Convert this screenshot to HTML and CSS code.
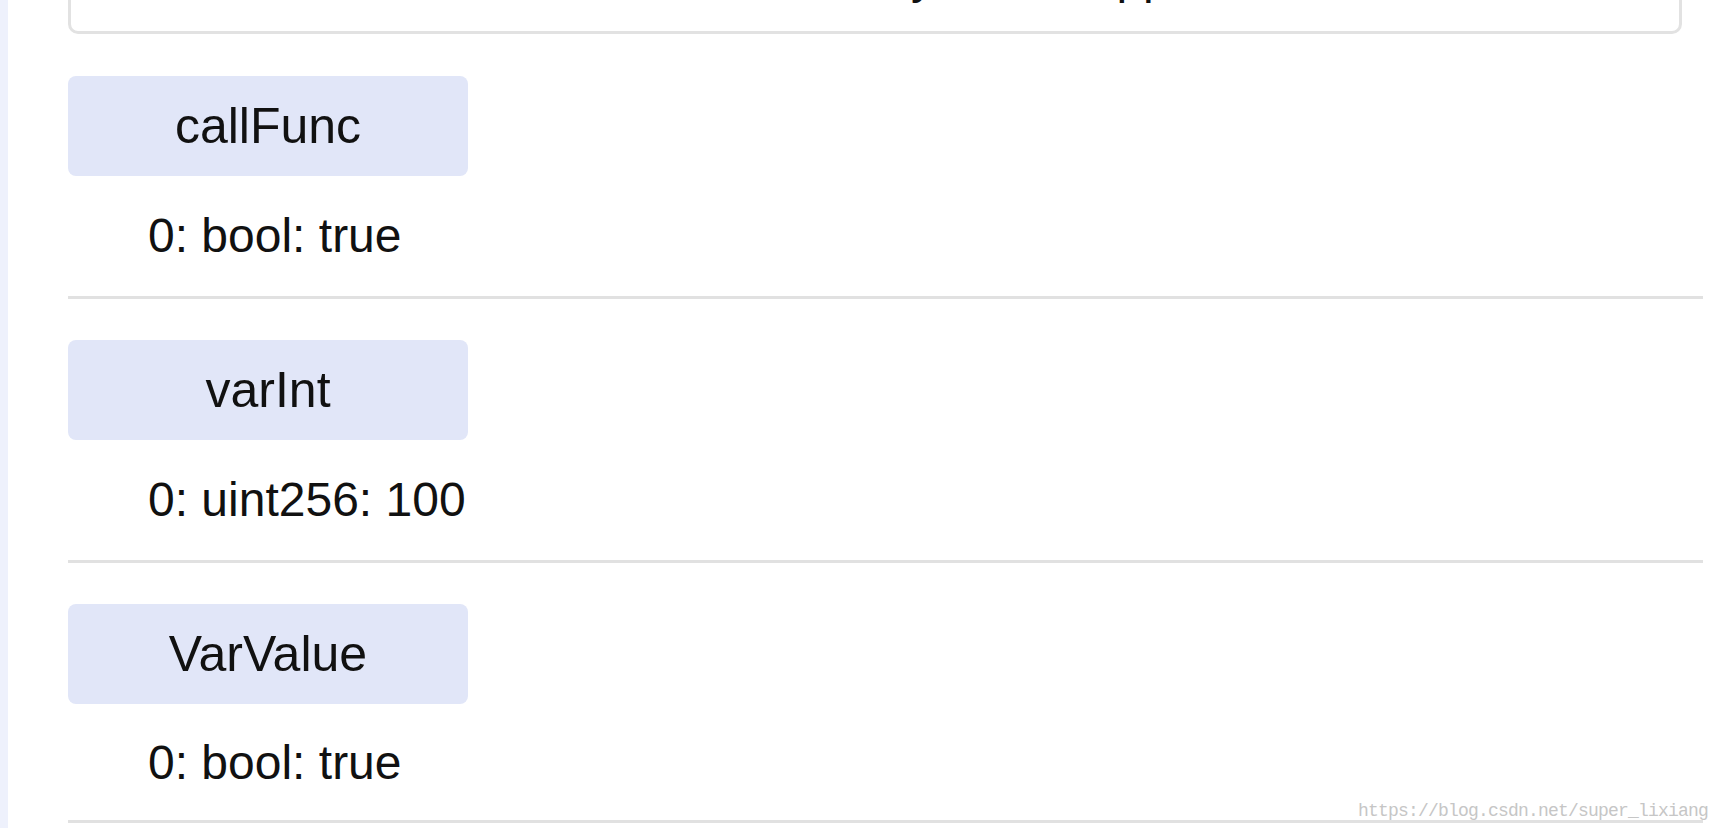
FILE: index.html
```html
<!DOCTYPE html>
<html lang="en">
<head>
<meta charset="utf-8">
<title>Results</title>
<link rel="stylesheet" href="styles.css">
</head>
<body>
<div class="page">
  <aside class="rail"></aside>
  <main class="content">
    <div class="card"><p class="card-text">my new DApp</p></div>
    <section class="result">
      <button class="fn" type="button">callFunc</button>
      <div class="value">0: bool: true</div>
    </section>
    <section class="result">
      <button class="fn" type="button">varInt</button>
      <div class="value">0: uint256: 100</div>
    </section>
    <section class="result result-last">
      <button class="fn" type="button">VarValue</button>
      <div class="value">0: bool: true</div>
    </section>
  </main>
</div>
<div class="watermark">https://blog.csdn.net/super_lixiang</div>
</body>
</html>
```
FILE: styles.css
```css
html, body {
  margin: 0;
  padding: 0;
  background: #ffffff;
}

body {
  width: 1720px;
  height: 828px;
  overflow: hidden;
  position: relative;
  font-family: "Liberation Sans", Arial, sans-serif;
  color: #111111;
}

.page {
  display: flex;
  height: 828px;
  overflow: hidden;
}

.rail {
  width: 8px;
  flex: 0 0 8px;
  background: #eef1fc;
}

.content {
  flex: 1;
  padding: 0 17px 0 60px;
}

.card {
  margin: -74px 21px 1px 0;
  border: 3px solid #e2e2e2;
  border-radius: 10px;
  padding: 20px 0 26px 800px;
}

.card-text {
  margin: 0;
  font-size: 48px;
  line-height: 56px;
  white-space: nowrap;
}

.result {
  padding: 41px 0 32px;
  border-bottom: 3px solid #e1e1e1;
}

.result-last {
  padding-bottom: 29px;
}

.fn {
  display: block;
  width: 400px;
  height: 100px;
  padding: 0;
  border: none;
  border-radius: 8px;
  background: #e1e6f8;
  font-family: "Liberation Sans", Arial, sans-serif;
  font-size: 50px;
  line-height: 100px;
  color: #111111;
  text-align: center;
}

.value {
  margin: 32px 0 0 80px;
  font-size: 48px;
  line-height: 56px;
  white-space: nowrap;
}

.result-last .value {
  margin-top: 31px;
}

.watermark {
  position: absolute;
  top: 802px;
  right: 12px;
  font-family: "Liberation Mono", "Courier New", monospace;
  font-size: 18px;
  line-height: 18px;
  letter-spacing: -0.8px;
  color: #c6c6c6;
  white-space: nowrap;
}
```
